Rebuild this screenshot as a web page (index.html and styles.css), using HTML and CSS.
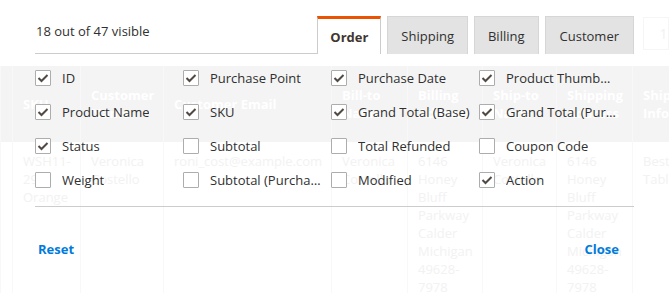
FILE: index.html
```html
<!DOCTYPE html>
<html lang="en">
<head>
<meta charset="UTF-8" />
<meta name="viewport" content="width=device-width, initial-scale=1" />
<title>Columns</title>
<link rel="stylesheet" href="styles.css">
</head>
<body>

<div class="page">
  <!-- grille des commandes, derriere le panneau -->
  <div class="toolbar">
    <span class="per-page">20</span>
    <span class="caret">▾</span>
    <span class="per-page-label">per page</span>
    <span class="pager">1</span>
  </div>
  <table class="grid">
    <colgroup>
      <col style="width:12px"><col style="width:68px"><col style="width:83px"><col style="width:168px">
      <col style="width:76px"><col style="width:75px"><col style="width:74px"><col style="width:76px"><col style="width:75px">
    </colgroup>
    <thead>
      <tr>
        <th></th><th>SKU</th><th>Customer Name</th><th>Customer Email</th><th>Bill-to Name</th>
        <th>Billing Address</th><th>Ship-to Name</th><th>Shipping Address</th><th>Shipping Information</th>
      </tr>
    </thead>
    <tbody>
      <tr>
        <td></td><td>WSH11-29-Orange</td><td>Veronica Costello</td><td>roni_cost@example.com</td><td>Veronica Costello</td>
        <td>6146 Honey Bluff Parkway Calder Michigan 49628-7978</td><td>Veronica Costello</td>
        <td>6146 Honey Bluff Parkway Calder Michigan 49628-7978</td><td>Best Table</td>
      </tr>
    </tbody>
  </table>

  <div class="columns-panel">
    <div class="panel-head">
      <div class="visible-count">18 out of 47 visible</div>
      <ul class="tabs">
        <li class="tab active">Order</li>
        <li class="tab">Shipping</li>
        <li class="tab">Billing</li>
        <li class="tab">Customer</li>
      </ul>
    </div>

    <div class="options">
      <label class="option"><span class="box checked"></span><span class="name">ID</span></label>
      <label class="option"><span class="box checked"></span><span class="name">Purchase Point</span></label>
      <label class="option"><span class="box checked"></span><span class="name">Purchase Date</span></label>
      <label class="option"><span class="box checked"></span><span class="name">Product Thumbnail</span></label>

      <label class="option"><span class="box checked"></span><span class="name">Product Name</span></label>
      <label class="option"><span class="box checked"></span><span class="name">SKU</span></label>
      <label class="option"><span class="box checked"></span><span class="name">Grand Total (Base)</span></label>
      <label class="option"><span class="box checked"></span><span class="name">Grand Total (Purchased)</span></label>

      <label class="option"><span class="box checked"></span><span class="name">Status</span></label>
      <label class="option"><span class="box"></span><span class="name">Subtotal</span></label>
      <label class="option"><span class="box"></span><span class="name">Total Refunded</span></label>
      <label class="option"><span class="box"></span><span class="name">Coupon Code</span></label>

      <label class="option"><span class="box"></span><span class="name">Weight</span></label>
      <label class="option"><span class="box"></span><span class="name">Subtotal (Purchased)</span></label>
      <label class="option"><span class="box"></span><span class="name">Modified</span></label>
      <label class="option"><span class="box checked"></span><span class="name">Action</span></label>
    </div>

    <div class="panel-foot">
      <a href="#" class="action">Reset</a>
      <a href="#" class="action">Close</a>
    </div>
  </div>
</div>

<script>
  // coche dessinee en svg dans chaque case cochee
  const check = '<svg width="12" height="10" viewBox="0 0 12 10"><polyline points="1.5,5 4.5,8 10.5,2" fill="none" stroke="#514943" stroke-width="2"/></svg>';
  document.querySelectorAll(".box.checked").forEach(box => {
    box.innerHTML = check;
  });
</script>

</body>
</html>
```

FILE: styles.css
```css
body {
  font-family: "Open Sans", "Liberation Sans", sans-serif;
  background: #fff;
  color: #303030;
  margin: 0; padding: 0;
  overflow: hidden;
}
.page {
  position: relative;
  width: 669px;
  height: 293px;
  overflow: hidden;
}
/* Grille en fond (a peine visible sous le panneau) */
.toolbar {
  height: 66px;
  display: flex;
  align-items: center;
  padding-left: 406px;
  font-size: 14px;
  color: #f1f1f1;
  white-space: nowrap;
}
.caret {
  margin-left: 39px;
  font-size: 12px;
}
.per-page-label {
  margin-left: 12px;
}
.pager {
  margin-left: 106px;
  padding: 6px 0 6px 16px;
  border: 1px solid #f6f6f6;
}
.grid {
  border-collapse: collapse;
  table-layout: fixed;
  width: 707px;
  font-size: 13px;
  line-height: 18px;
}
.grid th {
  background: #f4f4f4;
  color: #fff;
  font-weight: 700;
  text-align: left;
  vertical-align: middle;
  height: 76px;
  padding: 0 6px 0 10px;
  border-left: 1px solid #f8f8f8;
}
.grid td {
  color: #f2f2f2;
  vertical-align: top;
  padding: 10px 6px 0 10px;
  border-left: 1px solid #f8f8f8;
}
/* Panneau des colonnes */
.columns-panel {
  position: absolute;
  top: 0; left: 0; right: 0; bottom: 0;
  padding: 16px 35px 0 35px;
}
.panel-head {
  display: flex;
  width: 599px;
}
.visible-count {
  flex: 1;
  font-size: 13px;
  line-height: 18px;
  padding: 6px 0 13px 1px;
  border-bottom: 1px solid #ccc;
  background: #fff;
}
.tabs {
  display: flex;
  gap: 6px;
  list-style: none;
  margin: 0; padding: 0;
}
.tab {
  height: 38px;
  box-sizing: border-box;
  display: flex;
  align-items: center;
  padding: 0 13px;
  font-size: 13px;
  background: #e3e3e3;
  border: 1px solid #d6d6d6;
  border-bottom: none;
  color: #303030;
}
.tab:last-child {
  padding: 0 14px;
}
.tab.active {
  background: #fff;
  border-top: 3px solid #eb5202;
  border-left: 1px solid #ccc;
  border-right: 1px solid #ccc;
  padding: 0 12px;
  font-weight: 700;
  color: #41362f;
}
/* Cases a cocher */
.options {
  display: grid;
  grid-template-columns: repeat(4, 148px);
  grid-auto-rows: 34px;
  margin-top: 7px;
  padding-bottom: 9px;
  border-bottom: 1px solid #ccc;
  width: 599px;
}
.option {
  display: flex;
  align-items: center;
  gap: 11px;
  font-size: 13px;
  line-height: 18px;
  cursor: pointer;
}
.box {
  width: 16px;
  height: 16px;
  box-sizing: border-box;
  border: 1px solid #adadad;
  border-radius: 1px;
  background: #fff;
  display: flex;
  align-items: center;
  justify-content: center;
  flex-shrink: 0;
}
.name {
  max-width: 112px;
  white-space: nowrap;
  overflow: hidden;
  text-overflow: ellipsis;
}
.panel-foot {
  display: flex;
  justify-content: space-between;
  width: 599px;
  margin-top: 33px;
  padding: 0 15px 0 3px;
  box-sizing: border-box;
}
.action {
  color: #007bdb;
  font-size: 13px;
  font-weight: 700;
  line-height: 18px;
  text-decoration: none;
}
```
